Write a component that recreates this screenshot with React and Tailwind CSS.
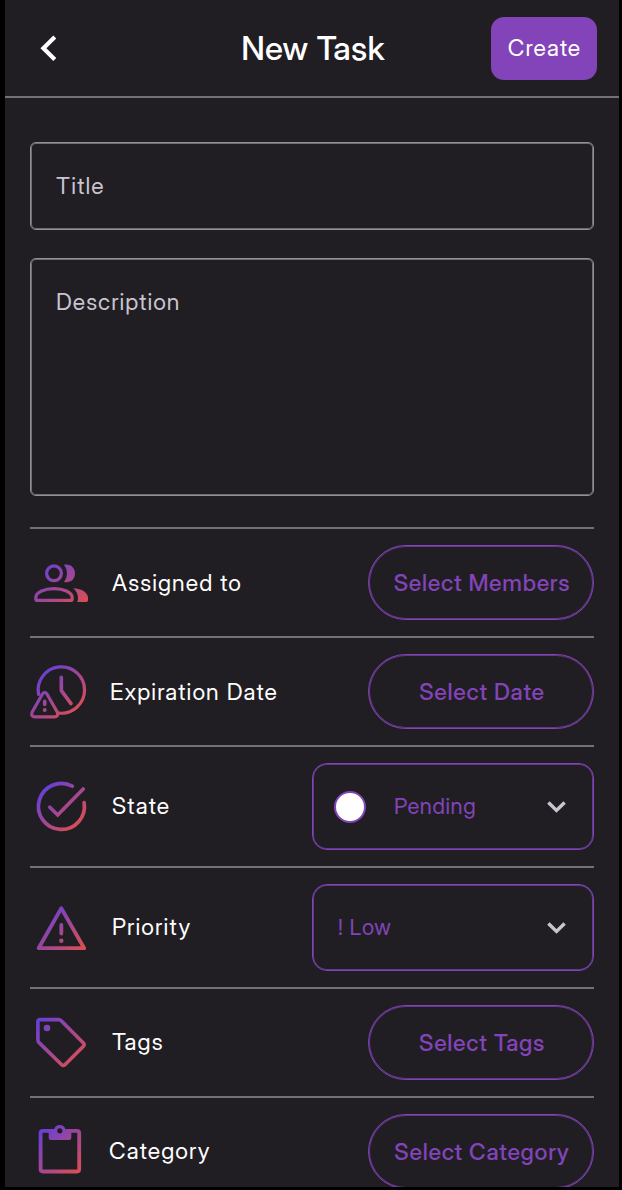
import React from "react";

function Gradient({ id, x1, y1, x2, y2 }) {
  return (
    <defs>
      <linearGradient id={id} gradientUnits="userSpaceOnUse" x1={x1} y1={y1} x2={x2} y2={y2}>
        <stop offset="0" stopColor="#643fdb" />
        <stop offset="1" stopColor="#dc4f50" />
      </linearGradient>
    </defs>
  );
}

function MembersIcon() {
  return (
    <svg className="h-15 w-15 shrink-0" viewBox="30 553 60 60" fill="none">
      <Gradient id="members" x1="43" y1="561" x2="82" y2="608" />
      <circle cx="54" cy="573.3" r="7.4" stroke="url(#members)" strokeWidth="3.2" />
      <path d="M64 564.8C71 563.6 75 568.2 75 573.4S71 583.2 64 582Q67 578 67 573.4T64 564.8Z" fill="url(#members)" />
      <path
        d="M37.3 600.4Q35.8 600.4 35.8 598.9V597.6C35.8 592 45 588.6 54 588.6S72.2 592 72.2 597.6V598.9Q72.2 600.4 70.7 600.4Z"
        stroke="url(#members)"
        strokeWidth="3.2"
      />
      <path d="M73.2 588.2C82 588.6 88 592.6 88 598V600.3Q88 602 86.3 602H77.2Q78 600.6 78 598C78 594 76.2 590.8 73.2 588.2Z" fill="url(#members)" />
    </svg>
  );
}

function ExpirationIcon() {
  return (
    <svg className="h-15 w-15 shrink-0" viewBox="30 662 60 60" fill="none">
      <Gradient id="expiration" x1="39" y1="672" x2="78" y2="713" />
      <g stroke="url(#expiration)" strokeWidth="3.2" strokeLinecap="round" strokeLinejoin="round">
        <path d="M38.6 694.5A23.2 23.2 0 1 1 59 713.1" />
        <path d="M61.3 677.2L61.35 690.6L71 703.6" strokeWidth="3.6" />
        <path d="M42.3 694.2Q44.7 690.8 47.1 694.2L57.2 712Q58.8 716.6 54.8 716.8H34.6Q30.6 716.6 32.2 712Z" />
        <path d="M44.7 701.4L44.75 704.4" strokeWidth="3.6" />
      </g>
      <circle cx="44.7" cy="710" r="2" fill="url(#expiration)" />
    </svg>
  );
}

function StateIcon() {
  return (
    <svg className="h-15 w-15 shrink-0" viewBox="30 777 60 60" fill="none">
      <Gradient id="state" x1="42" y1="788" x2="80" y2="826" />
      <g stroke="url(#state)" strokeWidth="3.7" strokeLinecap="round">
        <path d="M72.3 786.2A23 23 0 1 0 84.1 802.6" />
        <path d="M49.8 807.2L57.7 815L83.2 789" strokeLinejoin="miter" />
      </g>
    </svg>
  );
}

function PriorityIcon() {
  return (
    <svg className="h-15 w-15 shrink-0" viewBox="30 898 60 60" fill="none">
      <Gradient id="priority" x1="42" y1="910" x2="82" y2="952" />
      <g stroke="url(#priority)" strokeWidth="3.8" strokeLinejoin="round" strokeLinecap="round">
        <path d="M61.3 908.2L38.6 948.2H84.2Z" />
        <path d="M61.35 924.8L61.3 933.6" />
      </g>
      <circle cx="61.3" cy="940.7" r="2.2" fill="url(#priority)" />
    </svg>
  );
}

function TagIcon() {
  return (
    <svg className="h-15 w-15 shrink-0" viewBox="30 1013 60 60" fill="none">
      <Gradient id="tag" x1="37" y1="1018" x2="82" y2="1063" />
      <path
        d="M40.2 1019.6H58.8Q60 1019.6 61 1020.6L83.4 1043Q85 1044.6 83.4 1046.2L64.9 1064.7Q63.3 1066.3 61.7 1064.7L38.8 1042.4Q37.9 1041.5 37.9 1040.3V1021.9Q37.9 1019.6 40.2 1019.6Z"
        stroke="url(#tag)"
        strokeWidth="3.6"
      />
      <circle cx="47" cy="1028" r="3.3" fill="url(#tag)" />
    </svg>
  );
}

function CategoryIcon() {
  return (
    <svg className="h-15 w-15 shrink-0" viewBox="30 1122 60 60" fill="none">
      <Gradient id="category" x1="39" y1="1129" x2="80" y2="1173" />
      <rect x="40.6" y="1130.9" width="38.6" height="40.6" rx="2.2" stroke="url(#category)" strokeWidth="3.8" />
      <path
        fillRule="evenodd"
        d="M48.7 1129H54.2A5.8 5.8 0 0 1 65.3 1129H71.3V1138Q71.3 1140 69.3 1140H50.7Q48.7 1140 48.7 1138Z"
        fill="url(#category)"
      />
      <circle cx="59.8" cy="1130.8" r="2.6" fill="#201e23" />
    </svg>
  );
}

function Chevron() {
  return (
    <svg className="h-6 w-6 shrink-0" viewBox="545 794.6 24 24" fill="none">
      <path d="M548.4 802.2L556.5 810L564.6 802.2" stroke="#cac4d0" strokeWidth="3.5" />
    </svg>
  );
}

function Row({ icon, label, labelClass, children }) {
  return (
    <div className="flex shrink-0 items-center border-b-2 border-[#737273] py-4">
      {icon}
      <span className={`flex-1 whitespace-nowrap text-[23px] leading-8 tracking-[1.1px] text-white ${labelClass}`}>
        {label}
      </span>
      {children}
    </div>
  );
}

function PillButton({ children }) {
  return (
    <button className="flex h-[75px] w-[226px] shrink-0 items-center justify-center rounded-full border border-[#8244b8] pt-px pl-[2px] text-[23px] font-medium tracking-[0.7px] whitespace-nowrap text-[#8244b8] shadow-[inset_0_0_0_1px_#8244b8b0]">
      {children}
    </button>
  );
}

function Select({ children }) {
  return (
    <button className="flex h-[87px] w-[282px] shrink-0 items-center justify-between rounded-[15px] border border-[#8244b8] pr-6 pl-[21px] text-[22px] tracking-[0.6px] text-[#8244b8] shadow-[inset_0_0_0_1px_#8244b8b0]">
      {children}
      <Chevron />
    </button>
  );
}

export default function App() {
  return (
    <div className="h-[1190px] w-[622px] overflow-hidden bg-black pr-[3px] pb-[3px] pl-[5px] font-['Inter_Display','Inter',sans-serif]">
      <main className="flex h-full flex-col overflow-hidden bg-[#201e23]">
        <header className="flex h-[98px] shrink-0 items-center justify-between border-b-2 border-[#737273] pr-[22px] pl-[31px]">
          <svg className="h-7 w-[106px]" viewBox="36 34.4 106 28" fill="none">
            <path d="M54.8 37.3L43.4 48.6L54.8 59.9" stroke="#fff" strokeWidth="4.2" />
          </svg>
          <h1 className="pr-[7px] text-[33px] leading-10 font-medium tracking-[0.2px] text-white">New Task</h1>
          <button className="h-[63px] w-[106px] rounded-[13px] bg-[#8244b8] pt-px pl-px text-[23px] tracking-[1px] text-white">
            Create
          </button>
        </header>
        <section className="flex flex-col px-[25px] pt-11">
          <div className="flex h-[88px] shrink-0 items-center rounded-[6px] border border-[#938f99] pt-px pl-[25px] text-[23px] tracking-[1.1px] text-[#cac4d0] shadow-[inset_0_0_0_1px_#938f99b0]">
            Title
          </div>
          <div className="mt-7 h-[238px] shrink-0 rounded-[6px] border border-[#938f99] pt-[27px] pl-[25px] text-[23px] leading-8 tracking-[1px] text-[#cac4d0] shadow-[inset_0_0_0_1px_#938f99b0]">
            Description
          </div>
          <div className="mt-[31px] flex flex-col border-t-2 border-[#737273]">
            <Row icon={<MembersIcon />} label="Assigned to" labelClass="pl-[22px]">
              <PillButton>Select Members</PillButton>
            </Row>
            <Row icon={<ExpirationIcon />} label="Expiration Date" labelClass="pl-5">
              <PillButton>Select Date</PillButton>
            </Row>
            <Row icon={<StateIcon />} label="State" labelClass="pb-px pl-[22px]">
              <Select>
                <span className="h-8 w-8 rounded-full border-2 border-[#8244b8] bg-white" />
                <span className="flex-1 pl-7 text-left">Pending</span>
              </Select>
            </Row>
            <Row icon={<PriorityIcon />} label="Priority" labelClass="pb-px pl-[22px]">
              <Select>
                <span className="pl-1">! Low</span>
              </Select>
            </Row>
            <Row icon={<TagIcon />} label="Tags" labelClass="pb-px pl-[22px]">
              <PillButton>Select Tags</PillButton>
            </Row>
            <Row icon={<CategoryIcon />} label="Category" labelClass="pb-px pl-[19px]">
              <PillButton>Select Category</PillButton>
            </Row>
          </div>
        </section>
      </main>
    </div>
  );
}
